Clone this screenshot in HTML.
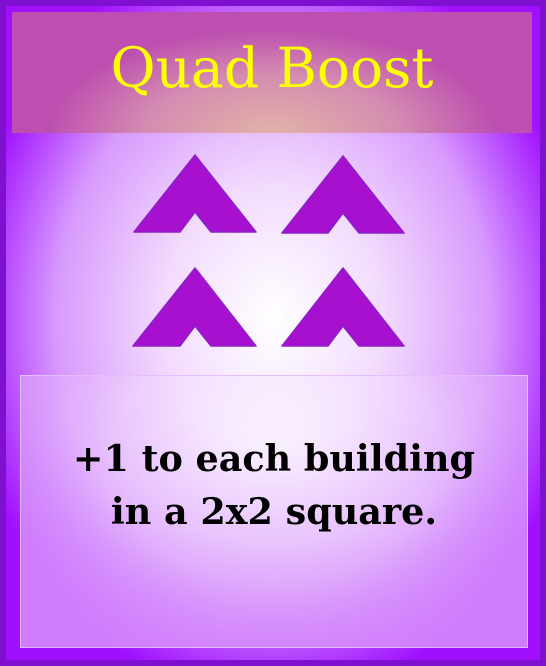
<!DOCTYPE html>
<html><head><style>
html,body{margin:0;padding:0;}
body{width:546px;height:666px;position:relative;overflow:hidden;background:#8010d0;font-family:"Liberation Serif",serif;}
.card{position:absolute;left:6px;top:6px;width:534px;height:654px;background:#9900ff;}
.bg{position:absolute;left:6px;top:6px;right:6px;bottom:6px;background:radial-gradient(ellipse 310px 380px at 50% 48%, #ffffff 0%, #f2dcfd 35%, #d89afd 70%, #a010ff 100%);}
.head{position:absolute;left:12px;top:12px;width:520px;height:121px;background:radial-gradient(ellipse 280px 130px at 50% 100%, #e2b2a8 0%, #d48cb0 45%, #bd4fb0 80%);}
.head div{position:absolute;left:0;right:0;top:26px;text-align:center;color:#ffff00;line-height:60px;font-family:"DejaVu Serif","Liberation Serif",serif;font-size:55px;}
.box{position:absolute;left:20px;top:375px;width:508px;height:273px;background:radial-gradient(ellipse 330px 200px at 50% 25%, rgba(255,255,255,0.5) 0%, rgba(240,215,253,0.5) 50%, rgba(216,144,251,0.85) 100%);border:1px solid rgba(230,200,255,0.8);box-sizing:border-box;}
.box div{position:absolute;left:0;right:0;top:56px;text-align:center;font-weight:bold;line-height:53px;color:#000;font-family:"DejaVu Serif","Liberation Serif",serif;font-size:36.5px;}
svg{position:absolute;left:0;top:0;}
</style></head><body>
<div class="card"></div>
<div class="bg"></div>
<div class="head"><div>Quad Boost</div></div>
<svg width="546" height="666">
<g fill="#a810d0" stroke="#8a20c8" stroke-width="1.5" stroke-linejoin="round">
<polygon points="195,155 256,232 211,232 195,212 180,232 134,232"/>
<polygon points="343,156 404,233 359,233 343,213 328,233 282,233"/>
<polygon points="195,268 256,346 211,346 195,326 180,346 133,346"/>
<polygon points="343,268 404,346 359,346 343,326 328,346 282,346"/>
</g>
</svg>
<div class="box"><div>+1 to each building<br>in a 2x2 square.</div></div>
</body></html>
